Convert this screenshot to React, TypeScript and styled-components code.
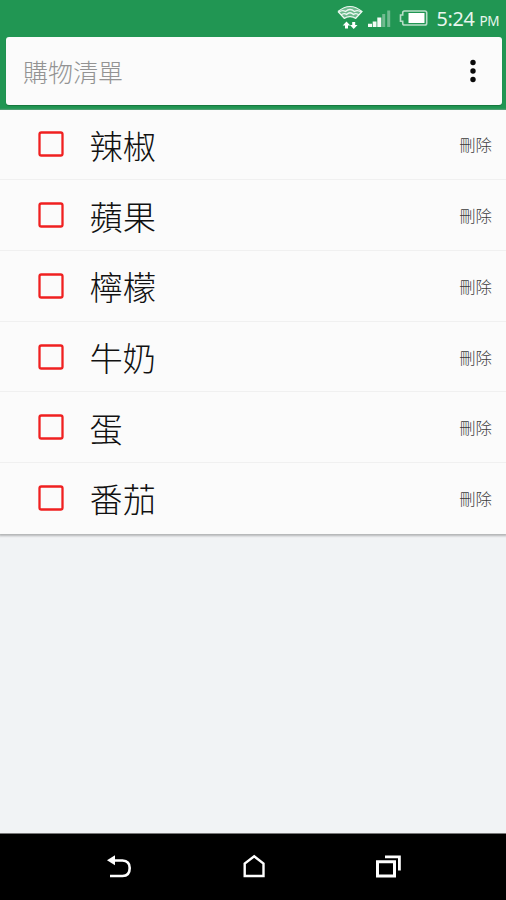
import React from "react";
import styled, { createGlobalStyle } from "styled-components";

const GlobalStyle = createGlobalStyle`
  * { box-sizing: border-box; }
  body { margin: 0; background: #f1f3f5; }
`;

const Screen = styled.div`
  display: flex;
  flex-direction: column;
  width: 506px;
  height: 900px;
  overflow: hidden;
  background: #f1f3f5;
  font-family: "Noto Sans", "Noto Sans CJK TC", sans-serif;
  font-weight: 300;
`;

const Header = styled.header`
  height: 109.6px;
  flex: none;
  background: #219653;
`;

const StatusBar = styled.div`
  height: 37px;
  display: flex;
  align-items: flex-start;
  justify-content: flex-end;
  padding-right: 7px;
  color: #e9f6ee;
  svg { flex: none; }
`;

const Clock = styled.time`
  display: flex;
  align-items: baseline;
  gap: 5px;
  margin: 6px 0 0 8px;
  font-family: "Noto Sans", sans-serif;
  font-weight: 400;
  font-size: 19.8px;
  line-height: 26px;
  letter-spacing: -0.35px;
`;

const Meridiem = styled.span`
  font-size: 13.5px;
  letter-spacing: -0.4px;
`;

const AddCard = styled.div`
  display: flex;
  align-items: center;
  justify-content: space-between;
  height: 68px;
  margin: 0 4px 0 6px;
  padding: 0 24px 0 17px;
  border-radius: 3px;
  background: #fbfbfb;
  box-shadow: 0 1px 1px #16753c;
`;

const Hint = styled.span`
  font-family: "Noto Sans CJK TC", sans-serif;
  font-size: 25px;
  line-height: 36px;
  color: #939393;
`;

const MenuButton = styled.button`
  display: flex;
  padding: 0;
  border: 0;
  background: none;
`;

const List = styled.ul`
  flex: none;
  margin: 0;
  padding: 0;
  list-style: none;
  background: #fbfbfb;
  box-shadow: 0 1px 2px 1px #b3b5b6;
`;

const Row = styled.li`
  display: flex;
  align-items: center;
  height: 70.7px;
  padding: 0 14px 0 38px;
  border-bottom: 1px solid #f0f0f0;
  &:last-child { border-bottom-color: transparent; }
`;

const CheckBox = styled.svg`
  flex: none;
  width: 26px;
  height: 26px;
  fill: none;
  stroke: #f02020;
  stroke-width: 2.3;
`;

const Name = styled.span`
  flex: 1;
  margin-left: 25.5px;
  padding-top: 1px;
  font-family: "Noto Sans CJK TC", sans-serif;
  font-size: 33.3px;
  line-height: 48px;
  color: #111;
`;

const DeleteButton = styled.button`
  padding: 0;
  border: 0;
  background: none;
  font-family: "Noto Sans CJK TC", sans-serif;
  font-weight: 300;
  font-size: 16.4px;
  line-height: 24px;
  color: #3c3c3c;
`;

const NavBar = styled.nav`
  display: flex;
  align-items: flex-start;
  justify-content: space-between;
  height: 67px;
  margin-top: auto;
  padding: 19px 104px 0 105px;
  background: #000;
  border-top: 1px solid #777;
`;

const items = ["辣椒", "蘋果", "檸檬", "牛奶", "蛋", "番茄"];

const StatusIcons = () => (
  <svg width="94" height="34" viewBox="335 0 94 34" fill="none">
    <path d="M338 12Q350 1 362 12L355.5 19Q350 16 344.5 19Z" fill="#6dba8d" />
    <g stroke="#eef8f2" strokeWidth="1.2">
      <path d="M338 11.5Q350 1.5 362 11.5L355.5 18.5" />
      <path d="M338 11.5L344.5 18.5" />
      <path d="M339 12Q342.5 9.5 345.5 11.5Q350 7.5 354.5 11.5Q357.5 9.5 361 12" />
      <path d="M341 15Q344 12.5 346.5 14.5Q350 11 353.5 14.5Q356 12.5 359 15" />
      <path d="M344 18.5Q350 14.5 356 18.5" />
    </g>
    <path d="M342.7 25.5L346.5 21.5L350.3 25.5H348V28.5H345V25.5ZM350 25L353.7 29L357.5 25H355.2V22H352.2V25Z" fill="#fff" />
    <path d="M368 23.8h4v3.2h-4zM372.7 21.5h3.8V27h-3.8zM377.3 17.5h4V27h-4z" fill="#f5fbf7" />
    <path d="M382.2 14h3V27h-3zM387.2 10.5h3V27h-3z" fill="#72bb91" />
    <path d="M404.5 11h20.4q1.8 0 1.8 1.8v10.4q0 1.8-1.8 1.8H404.5q-1.8 0-1.8-1.8v-2H400.5V15h2.2v-2.2q0-1.8 1.8-1.8Z" stroke="#b8dec8" strokeWidth="1.6" />
    <path d="M408.5 13h16v10h-16z" fill="#fff" />
  </svg>
);

export default function App() {
  return (
    <>
      <GlobalStyle />
      <Screen>
        <Header>
          <StatusBar>
            <StatusIcons />
            <Clock>5:24<Meridiem>PM</Meridiem></Clock>
          </StatusBar>
          <AddCard>
            <Hint>購物清單</Hint>
            <MenuButton aria-label="選單">
              <svg width="10" height="24" viewBox="0 0 10 24" fill="#090909">
                <circle cx="5" cy="3.5" r="2.7" />
                <circle cx="5" cy="12" r="2.7" />
                <circle cx="5" cy="20.5" r="2.7" />
              </svg>
            </MenuButton>
          </AddCard>
        </Header>
        <List>
          {items.map((item) => (
            <Row key={item}>
              <CheckBox role="checkbox" aria-checked={false} viewBox="0 0 26 26">
                <rect x="1.5" y="1.5" width="23" height="23" rx="1.8" />
              </CheckBox>
              <Name>{item}</Name>
              <DeleteButton>刪除</DeleteButton>
            </Row>
          ))}
        </List>
        <NavBar>
          <svg width="28" height="28" viewBox="0 0 28 28" fill="none">
            <path d="M6 7.5H17.5Q24.7 7.8 24.7 15Q24.7 23 17.5 23H5" stroke="#fff" strokeWidth="2.6" />
            <path d="M2 7.2L10 2.2V12.2Z" fill="#fff" />
          </svg>
          <svg width="28" height="28" viewBox="0 0 28 28" fill="none" stroke="#fff" strokeWidth="2.4">
            <path d="M4.7 23V10.5L14.2 3.3L23.5 10.5V23Z" />
          </svg>
          <svg width="28" height="28" viewBox="0 0 28 28" fill="none" stroke="#fff">
            <path d="M3.5 8.7H20.5V23H3.5Z" strokeWidth="3" />
            <path d="M11 3.8H25.4V17.5" strokeWidth="2.8" />
          </svg>
        </NavBar>
      </Screen>
    </>
  );
}
